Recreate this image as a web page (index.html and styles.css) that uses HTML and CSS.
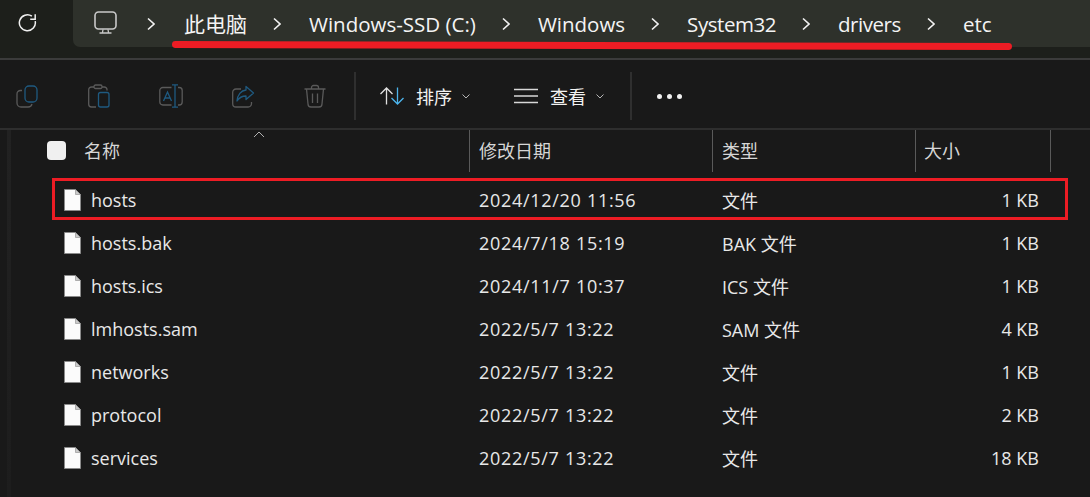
FILE: index.html
```html
<!DOCTYPE html>
<html lang="zh">
<head>
<meta charset="utf-8">
<title>etc</title>
<link rel="stylesheet" href="styles.css">
</head>
<body>
<svg class="defs" width="0" height="0" aria-hidden="true">
  <symbol id="file" viewBox="0 0 17 22">
    <path d="M.5.5H11.500L16.500 5.500V21.500H.5Z" fill="#fbfbfb" stroke="#8a8a8a"/>
    <path d="M11.500 .5V5.500H16.500Z" fill="#c9c9c9" stroke="#8a8a8a" stroke-width=".6"/>
  </symbol>
  <symbol id="chev" viewBox="0 0 8 14">
    <path d="M1 1.500 7 7 1 12.500" fill="none" stroke="#f2f2f2" stroke-width="1.6"/>
  </symbol>
  <symbol id="caret" viewBox="0 0 8 5">
    <path d="M.5.5 4 4 7.500.5" fill="none" stroke="#b5b5b5" stroke-width="1"/>
  </symbol>
</svg>
<div class="window">
  <header class="topbar">
    <div class="refresh">
      <svg width="20" height="20" viewBox="0 0 20 20" fill="none" stroke="#f0f0f0" stroke-width="1.500">
        <path d="M17.200 8.200A8 8 0 1 1 13.900 3.200"/>
        <path d="M17.200 1.200V6.300H12.200"/>
      </svg>
    </div>
    <nav class="address">
      <svg class="pc" width="23" height="23" viewBox="0 0 23 23" fill="none" stroke="#c9c9c9" stroke-width="1.6">
        <rect x="1" y="1" width="21" height="17" rx="3.500"/>
        <path d="M9 18.500 8.500 21.500M14 18.500 14.500 21.500M5.500 22H17.500" stroke-width="1.300"/>
      </svg>
      <svg class="sep sep-first"><use href="#chev"/></svg>
      <span class="crumb crumb-cjk">此电脑</span>
      <svg class="sep"><use href="#chev"/></svg>
      <span class="crumb">Windows-SSD (C:)</span>
      <svg class="sep"><use href="#chev"/></svg>
      <span class="crumb">Windows</span>
      <svg class="sep"><use href="#chev"/></svg>
      <span class="crumb crumb-tight">System32</span>
      <svg class="sep"><use href="#chev"/></svg>
      <span class="crumb crumb-tight">drivers</span>
      <svg class="sep"><use href="#chev"/></svg>
      <span class="crumb">etc</span>
    </nav>
    <div class="underline"></div>
  </header>

  <section class="toolbar">
    <div class="tools">
      <svg width="22" height="24" viewBox="0 0 22 24" fill="none" stroke-width="1.300">
        <path d="M6 6.500H4.500A3.500 3.500 0 0 0 1 10V19A4 4 0 0 0 5 23H12A4 4 0 0 0 16 20" stroke="#5a5a5a"/>
        <rect x="9" y="2" width="12" height="16" rx="4" stroke="#1f5a80"/>
      </svg>
      <svg width="22" height="24" viewBox="0 0 22 24" fill="none" stroke-width="1.300">
        <path d="M6 3H3.500A2.800 2.800 0 0 0 .7 5.800V20.200A2.800 2.800 0 0 0 3.500 23H8M19 6.500V5.800A2.800 2.800 0 0 0 16.200 3H14" stroke="#5a5a5a"/>
        <rect x="6" y="1" width="8" height="3.500" rx="1.500" stroke="#5a5a5a"/>
        <rect x="10.500" y="8.500" width="10.500" height="14.500" rx="2" stroke="#1f5a80"/>
      </svg>
      <svg width="24" height="24" viewBox="0 0 24 24" fill="none" stroke-width="1.300">
        <path d="M12.500 3.500H3.800A3 3 0 0 0 .8 6.500V18A3 3 0 0 0 3.800 21H12.500M19 3.500H20.200A3 3 0 0 1 23.200 6.500V18A3 3 0 0 1 20.200 21H19" stroke="#5a5a5a"/>
        <path d="M4.500 17 8.500 8 12.500 17M6 14H11" stroke="#1f5a80"/>
        <path d="M16 1V23M13 .8H19M13 23.200H19" stroke="#1f5a80"/>
      </svg>
      <svg width="23" height="23" viewBox="0 0 23 23" fill="none" stroke-width="1.300">
        <path d="M9 4H4A3.300 3.300 0 0 0 .7 7.300V18.700A3.300 3.300 0 0 0 4 22H16A3.300 3.300 0 0 0 19.500 18.700V17" stroke="#5a5a5a"/>
        <path d="M14 1.500 21.500 8 14 14.500V11C10 11 7.500 12 5 16 5.500 10 9 5.500 14 5Z" stroke="#1f5a80" stroke-linejoin="round"/>
      </svg>
      <svg width="22" height="24" viewBox="0 0 22 24" fill="none" stroke="#5a5a5a" stroke-width="1.300">
        <path d="M.5 5H21.500M7.500 5V3.500A2 2 0 0 1 9.500 1.500H12.500A2 2 0 0 1 14.500 3.500V5M2.500 5 4 20A3 3 0 0 0 7 23H15A3 3 0 0 0 18 20L19.500 5M8.500 9.500V19M13.500 9.500V19"/>
      </svg>
    </div>
    <div class="vline"></div>
    <div class="menu menu-sort">
      <svg width="24" height="18" viewBox="0 0 24 18" fill="none" stroke-width="1.300">
        <path d="M6.500 17.500V1M.5 7 6.500 1 12.500 7" stroke="#e0e0e0"/>
        <path d="M17.500 .5V17M11.500 11 17.500 17 23.500 11" stroke="#4cb4ec"/>
      </svg>
      <span class="menu-label">排序</span>
      <svg class="caret"><use href="#caret"/></svg>
    </div>
    <div class="menu menu-view">
      <svg width="24" height="16" viewBox="0 0 24 16" fill="none" stroke="#d8d8d8" stroke-width="1.500">
        <path d="M0 1.500H24M0 8H24M0 14.500H24"/>
      </svg>
      <span class="menu-label">查看</span>
      <svg class="caret"><use href="#caret"/></svg>
    </div>
    <div class="vline"></div>
    <div class="more"><i></i><i></i><i></i></div>
  </section>

  <main class="list">
    <div class="head">
      <div class="head-name">
        <span class="check"></span>
        <span>名称</span>
        <svg class="sort-mark" width="12" height="7" viewBox="0 0 12 7" fill="none" stroke="#b0b0b0" stroke-width="1"><path d="M1 6 6 1 11 6"/></svg>
      </div>
      <div class="head-cell">修改日期</div>
      <div class="head-cell">类型</div>
      <div class="head-cell head-size">大小</div>
    </div>
    <div class="rows">
      <div class="row"><span class="name"><svg class="ficon"><use href="#file"/></svg>hosts</span><span class="date">2024/12/20 11:56</span><span>文件</span><span class="size">1 KB</span></div>
      <div class="row"><span class="name"><svg class="ficon"><use href="#file"/></svg>hosts.bak</span><span class="date">2024/7/18 15:19</span><span>BAK 文件</span><span class="size">1 KB</span></div>
      <div class="row"><span class="name"><svg class="ficon"><use href="#file"/></svg>hosts.ics</span><span class="date">2024/11/7 10:37</span><span>ICS 文件</span><span class="size">1 KB</span></div>
      <div class="row"><span class="name"><svg class="ficon"><use href="#file"/></svg>lmhosts.sam</span><span class="date">2022/5/7 13:22</span><span>SAM 文件</span><span class="size">4 KB</span></div>
      <div class="row"><span class="name"><svg class="ficon"><use href="#file"/></svg>networks</span><span class="date">2022/5/7 13:22</span><span>文件</span><span class="size">1 KB</span></div>
      <div class="row"><span class="name"><svg class="ficon"><use href="#file"/></svg>protocol</span><span class="date">2022/5/7 13:22</span><span>文件</span><span class="size">2 KB</span></div>
      <div class="row"><span class="name"><svg class="ficon"><use href="#file"/></svg>services</span><span class="date">2022/5/7 13:22</span><span>文件</span><span class="size">18 KB</span></div>
    </div>
    <div class="highlight"></div>
  </main>
</div>
</body>
</html>
```

FILE: styles.css
```css
* { box-sizing: border-box; }
html, body { margin: 0; height: 100%; }
body {
  background: #191919;
  color: #f2f2f2;
  font-family: "Open Sans", "Noto Sans", "Noto Sans CJK SC", sans-serif;
  overflow: hidden;
}
.defs { position: absolute; }
.window { width: 1090px; height: 497px; display: flex; flex-direction: column; }

.topbar {
  position: relative;
  height: 60px;
  flex: none;
  display: flex;
  background: #1d1f1b;
  border-bottom: 2px solid #3b3b3b;
}
.refresh { width: 73px; flex: none; display: flex; justify-content: center; align-items: flex-start; padding: 13px 17px 0 0; }
.address {
  flex: 1;
  height: 47px;
  display: flex;
  align-items: center;
  padding: 0 0 0 21px;
  background: #2e312b;
  border-bottom-left-radius: 7px;
  font-size: 20.5px;
  color: #f4f4f4;
}
.pc { flex: none; margin-top: -3px; }
.sep { width: 8px; height: 14px; flex: none; margin: 0 28px 0 26px; }
.sep-first { margin: 0 29px 0 30px; }
.crumb { white-space: nowrap; line-height: 47px; margin-top: 1px; }
.crumb-cjk { font-size: 21px; }
.crumb-tight { letter-spacing: -.45px; }
.underline {
  position: absolute;
  left: 172px;
  top: 41.500px;
  width: 840px;
  height: 6.500px;
  border-radius: 4px;
  background: #ed1c24;
  transform: rotate(.14deg);
}

.toolbar {
  height: 70px;
  flex: none;
  display: flex;
  align-items: center;
  padding-top: 4px;
  background: #191919;
  border-bottom: 2px solid #2e2e2e;
  font-size: 18px;
}
.tools { display: flex; align-items: center; width: 354px; padding-left: 16px; gap: 49px; flex: none; }
.tools svg:nth-child(2) { margin-left: 1px; }
.vline { width: 2px; height: 48px; background: #2f2f2f; flex: none; }
.menu { display: flex; align-items: center; flex: none; }
.menu-sort { margin-left: 24px; width: 134px; }
.menu-view { width: 116px; }
.menu-label { margin-left: 12px; }
.caret { width: 8px; height: 5px; margin-left: 10px; }
.more { display: flex; gap: 5px; margin-left: 25px; }
.more i { width: 5px; height: 5px; border-radius: 50%; background: #f2f2f2; }

.list {
  position: relative;
  flex: 1;
  font-size: 18px;
  color: #e8e8e8;
  background: linear-gradient(#222222, #1d1d1d) no-repeat 7px 0 / 4px 100%;
}
.head, .row {
  display: grid;
  grid-template-columns: 469px 243px 203px 136px 1fr;
}
.head { height: 42px; color: #d6d6d6; }
.head-name { position: relative; display: flex; align-items: center; padding: 0 0 2px 47px; gap: 18px; }
.check { width: 19px; height: 19px; margin-top: 1px; border-radius: 4px; background: #f0f0f0; }
.sort-mark { position: absolute; left: 253px; top: 1px; }
.head-cell { border-left: 1px solid #5a5a5a; display: flex; align-items: center; padding: 0 0 2px 9px; }
.head-size { border-right: 1px solid #5a5a5a; padding-left: 8px; }

.rows { display: flex; flex-direction: column; padding-top: 6px; }
.row { height: 43px; align-items: center; grid-template-columns: 469px 243px 203px 135px 1fr; }
.row > span { white-space: nowrap; padding-left: 10px; }
.row > .name { display: flex; align-items: center; padding-left: 64px; gap: 10px; }
.row > .date { letter-spacing: .7px; }
.ficon { width: 17px; height: 22px; flex: none; }
.row > .size { text-align: right; padding: 0 11px 0 0; }
.highlight {
  position: absolute;
  left: 52px;
  top: 48px;
  width: 1016px;
  height: 42px;
  border: 3px solid #ed1c24;
  pointer-events: none;
}
```
